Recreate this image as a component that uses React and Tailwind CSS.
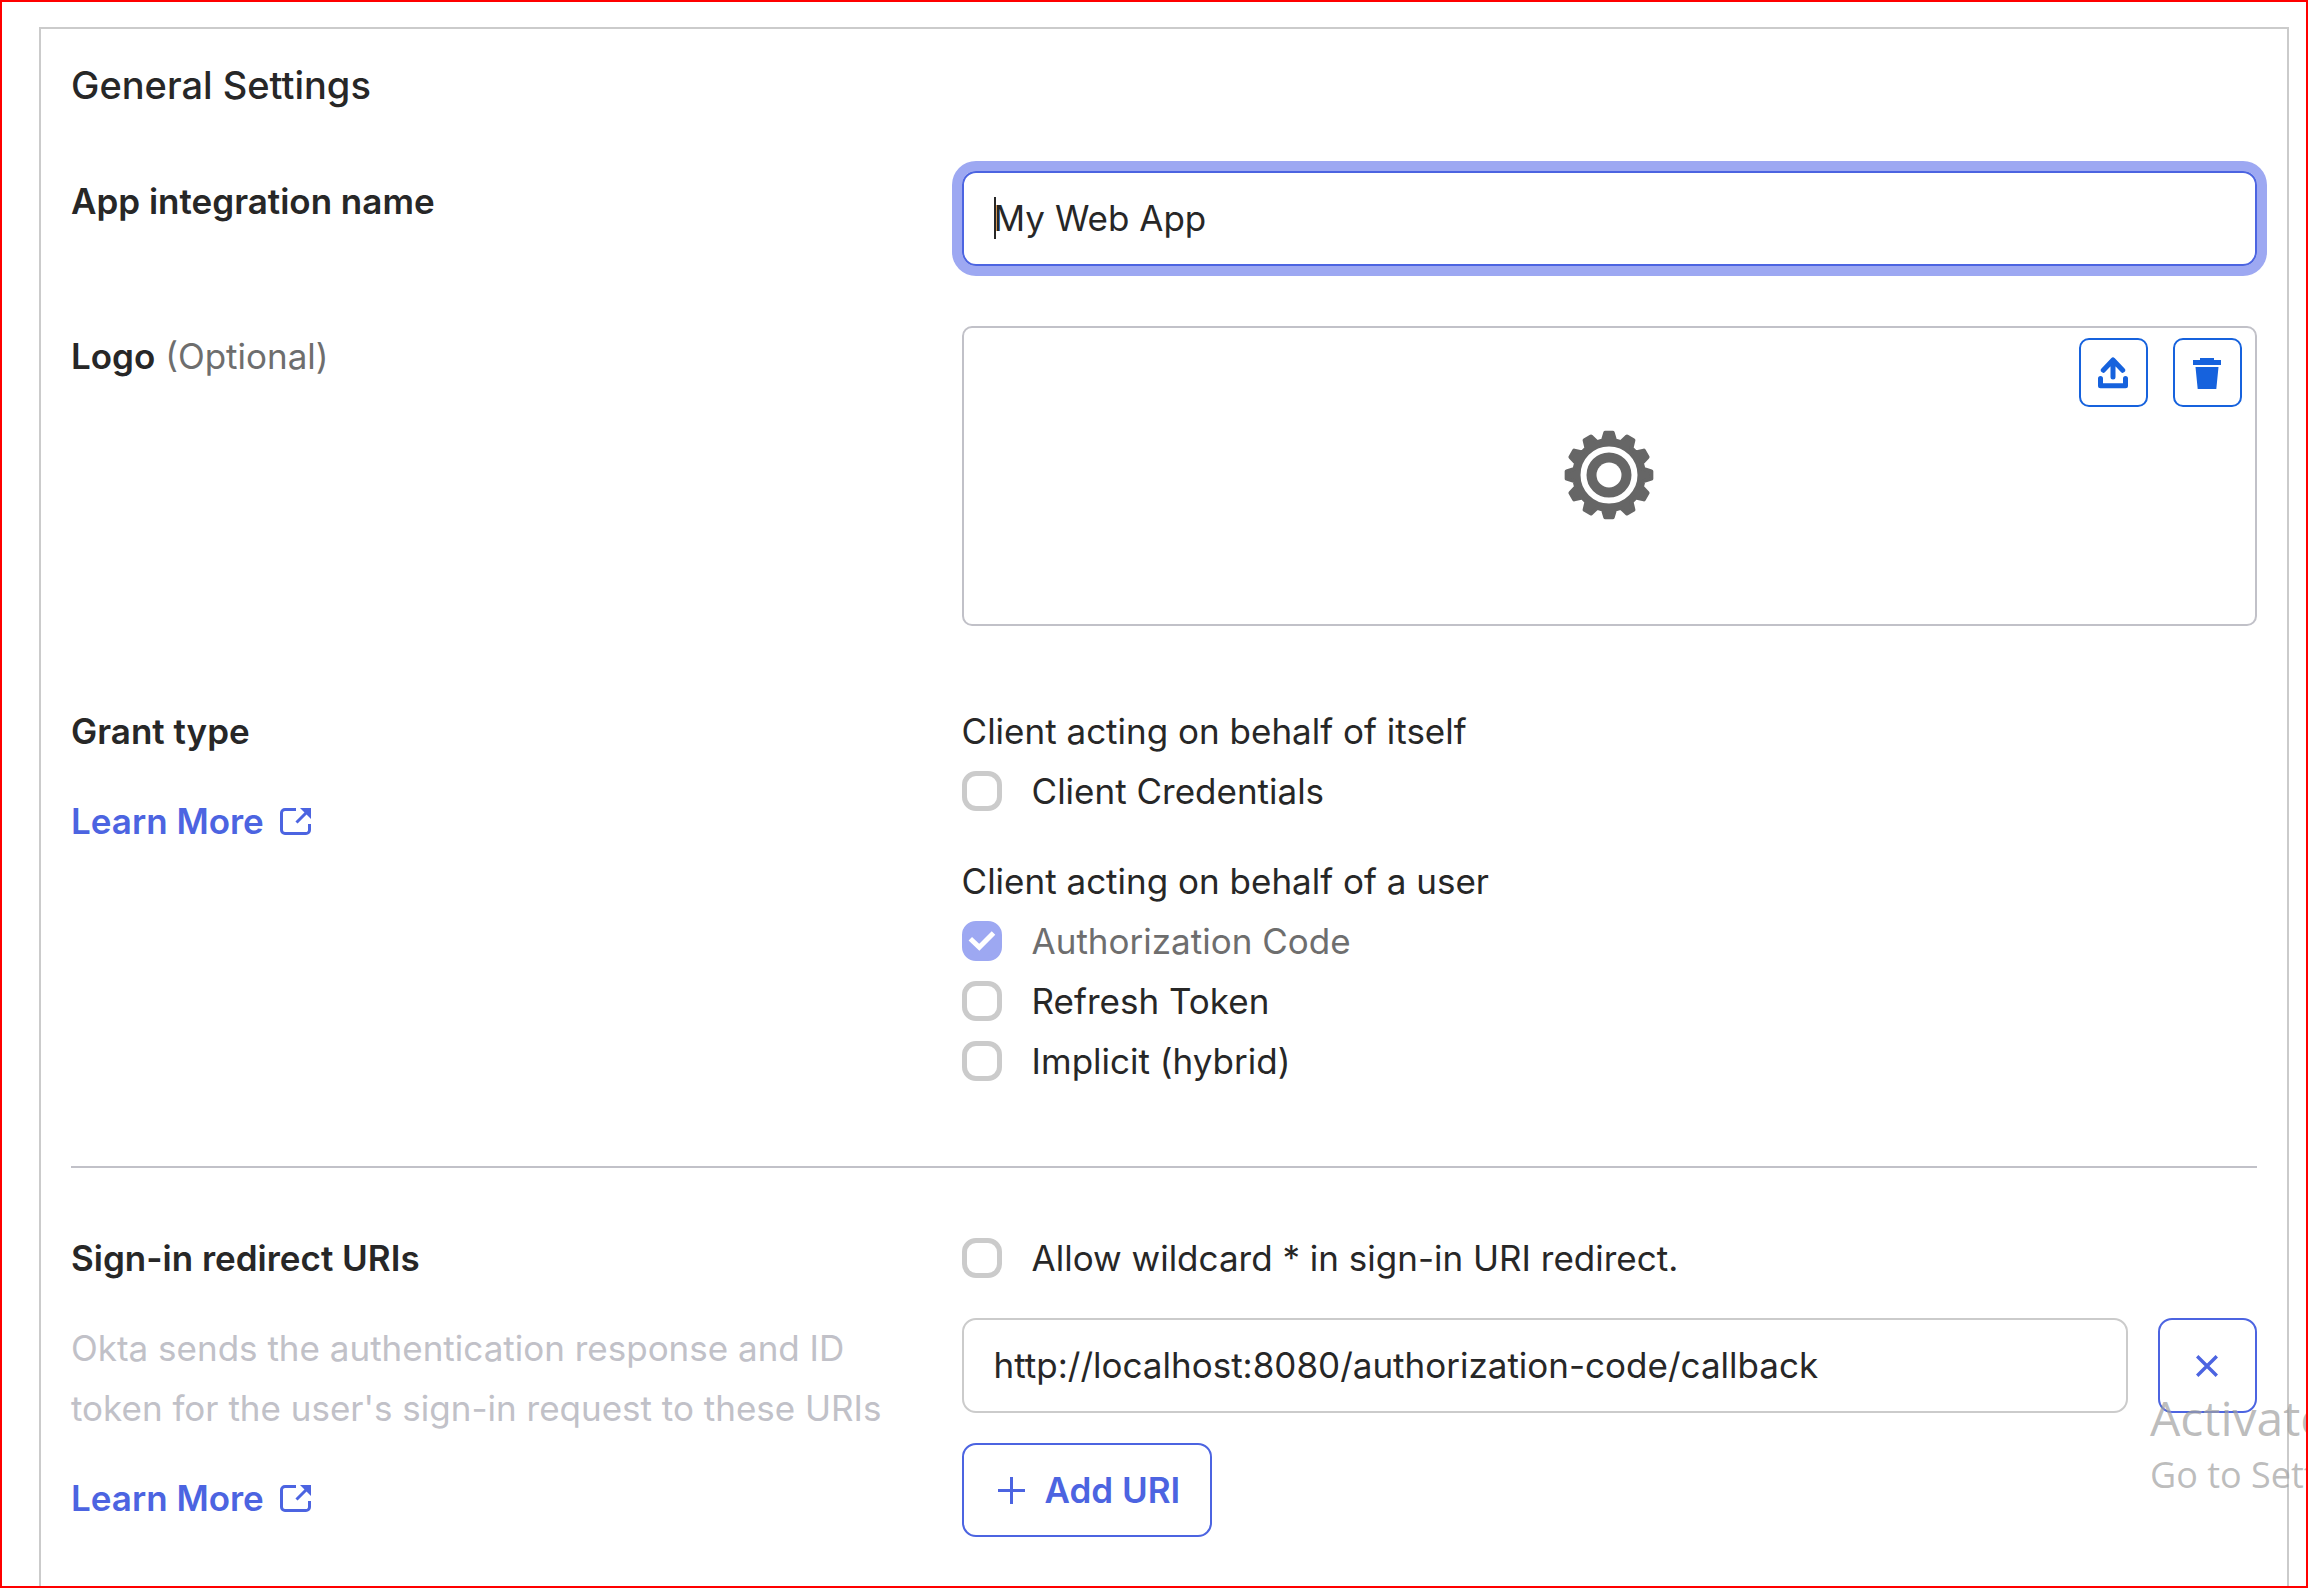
import React, { useState } from 'react';

const grantTypes = [
    { id: 'authorization_code', label: 'Authorization Code', checked: true, disabled: true },
    { id: 'refresh_token', label: 'Refresh Token' },
    { id: 'implicit', label: 'Implicit (hybrid)' }
];

const polar = (r, deg) => {
    const a = (deg * Math.PI) / 180;
    return `${(45 + r * Math.cos(a)).toFixed(2)} ${(45 + r * Math.sin(a)).toFixed(2)}`;
};

// 12 teeth, each one a small trapezoid standing on the rim
const gearPoints = Array.from({ length: 12 }, (_, i) => {
    const c = i * 30;
    return [polar(35, c - 10), polar(42.5, c - 5), polar(42.5, c + 5), polar(35, c + 10)];
}).flat();

const GearIcon = () => (
    <svg viewBox="0 0 90 90" className="w-[90px] h-[90px]" aria-hidden="true">
        <path d={`M${gearPoints.join('L')}Z`} fill="#666" stroke="#666" strokeWidth="4" strokeLinejoin="round" />
        <circle cx="45" cy="45" r="25.5" fill="none" stroke="#fff" strokeWidth="6" />
        <circle cx="45" cy="45" r="12.5" fill="#fff" />
    </svg>
);

const UploadIcon = () => (
    <svg viewBox="0 0 30 32" className="w-[30px] h-8" fill="none" stroke="currentColor" strokeWidth="5" strokeLinecap="round" strokeLinejoin="round" aria-hidden="true">
        <path d="M2.5 21.5V28.8H27.5V21.5" />
        <path d="M15 3V20M5.3 13.3L15 3L24.7 13.3" />
    </svg>
);

const TrashIcon = () => (
    <svg viewBox="0 0 28 32" className="w-7 h-8" fill="currentColor" aria-hidden="true">
        <path d="M7 1H21V3H28V8H0V3H7ZM2.5 10H25.5L23.3 32H4.7Z" />
    </svg>
);

const ExternalIcon = () => (
    <svg viewBox="0 0 31 27" className="w-[31px] h-[27px]" fill="none" stroke="currentColor" strokeWidth="3" aria-hidden="true">
        <path d="M16 1.5H5A3.5 3.5 0 0 0 1.5 5V22A3.5 3.5 0 0 0 5 25.5H26A3.5 3.5 0 0 0 29.5 22V16" />
        <path d="M16.5 14.5L27 4" />
        <path d="M20 0H31V11Z" fill="currentColor" stroke="none" />
    </svg>
);

const LearnMore = () => (
    <a href="#learn-more" className="flex items-center gap-4 w-fit mt-[30px] font-semibold text-[#4c64e1]">
        Learn More
        <ExternalIcon />
    </a>
);

const Checkbox = ({ id, label, checked = false, disabled = false }) => {
    const [on, setOn] = useState(checked);

    return (
        <div className="flex items-center gap-[30px]">
            <span className="relative flex">
                <input
                    id={id}
                    type="checkbox"
                    checked={on}
                    disabled={disabled}
                    onChange={(e) => setOn(e.target.checked)}
                    className="appearance-none w-10 h-10 rounded-[14px] border-5 border-[#cbcbcb] bg-white checked:border-[#9da8f2] checked:bg-[#9da8f2]"
                />
                {on && (
                    <svg viewBox="0 0 40 40" className="absolute inset-0 pointer-events-none" fill="none" stroke="#fff" strokeWidth="5" aria-hidden="true">
                        <path d="M8.3 17.8L17.3 26.3L31.5 12" />
                    </svg>
                )}
            </span>
            <label htmlFor={id} className={disabled ? 'text-[#6e6e6e]' : ''}>{label}</label>
        </div>
    );
};

const Row = ({ label, children, className = '' }) => (
    <div className={`grid grid-cols-[11fr_16fr] ${className}`}>
        <div>{label}</div>
        <div>{children}</div>
    </div>
);

const App = () => {
    const [name, setName] = useState('My Web App');
    const [uri, setUri] = useState('http://localhost:8080/authorization-code/callback');

    return (
        <div className="relative flex flex-col min-h-screen overflow-hidden border-2 border-[#ff0000] bg-white pt-[25px] pl-[37px] pr-[17px] font-['Inter',sans-serif] text-[35px] leading-[60px] text-[#272727]">
            <main className="grow border-2 border-b-0 border-[#cbcbcb] pt-[26px] px-[30px] pb-12">
                <h1 className="text-[38px] font-medium">General Settings</h1>

                <Row
                    className="mt-14"
                    label={<label htmlFor="app-name" className="font-semibold">App integration name</label>}
                >
                    <div className="relative">
                        <input
                            id="app-name"
                            type="text"
                            value={name}
                            onChange={(e) => setName(e.target.value)}
                            className="block w-full h-[95px] px-[30px] pb-0.5 rounded-[14px] border-2 border-[#4c64e1] ring-10 ring-[#9da8f2] outline-none caret-transparent"
                        />
                        {/* Text cursor */}
                        <span className="absolute left-8 top-[26px] w-0.5 h-[42px] bg-[#272727]"></span>
                    </div>
                </Row>

                <Row
                    className="mt-[60px]"
                    label={<span><span className="font-semibold">Logo</span> <span className="text-[#6e6e6e]">(Optional)</span></span>}
                >
                    <div className="relative flex items-center justify-center h-[300px] pb-[3px] rounded-[10px] border-2 border-[#c1c1c8]">
                        <GearIcon />
                        <div className="absolute top-[10px] right-[13px] flex gap-[25px] text-[#1662dd]">
                            <button aria-label="Upload logo" className="flex items-center justify-center w-[69px] h-[69px] rounded-[10px] border-2 border-[#1662dd]">
                                <UploadIcon />
                            </button>
                            <button aria-label="Delete logo" className="flex items-center justify-center w-[69px] h-[69px] rounded-[10px] border-2 border-[#1662dd]">
                                <TrashIcon />
                            </button>
                        </div>
                    </div>
                </Row>

                <Row
                    className="mt-[75px]"
                    label={
                        <>
                            <h2 className="font-semibold">Grant type</h2>
                            <LearnMore />
                        </>
                    }
                >
                    <p>Client acting on behalf of itself</p>
                    <Checkbox id="client_credentials" label="Client Credentials" />
                    <p className="mt-[30px]">Client acting on behalf of a user</p>
                    {grantTypes.map((g) => (
                        <Checkbox key={g.id} {...g} />
                    ))}
                </Row>

                <hr className="mt-[75px] mb-[60px] border-t-2 border-[#c1c1c8]" />

                <Row
                    label={
                        <>
                            <h2 className="font-semibold">Sign-in redirect URIs</h2>
                            <p className="mt-[30px] pr-12 text-[#c1c1c8]">
                                Okta sends the authentication response and ID token for the user's sign-in request to these URIs
                            </p>
                            <LearnMore />
                        </>
                    }
                >
                    <Checkbox id="wildcard" label="Allow wildcard * in sign-in URI redirect." />
                    <div className="flex gap-[30px] mt-[30px]">
                        <input
                            type="text"
                            aria-label="Sign-in redirect URI"
                            value={uri}
                            onChange={(e) => setUri(e.target.value)}
                            className="grow min-w-0 h-[95px] px-[30px] pb-0.5 rounded-[14px] border-2 border-[#cbcbcb] outline-none"
                        />
                        <button aria-label="Remove URI" className="flex items-center justify-center w-[99px] h-[95px] rounded-[14px] border-2 border-[#4c64e1] text-[#4c64e1]">
                            <svg viewBox="0 0 22 22" className="w-[22px] h-[22px]" stroke="currentColor" strokeWidth="3.4" aria-hidden="true">
                                <path d="M1.2 1.2L20.8 20.8M20.8 1.2L1.2 20.8" />
                            </svg>
                        </button>
                    </div>
                    <button className="flex items-center gap-5 h-[94px] mt-[30px] pl-[34px] pr-[30px] rounded-[14px] border-2 border-[#4c64e1] font-semibold text-[#4c64e1]">
                        <svg viewBox="0 0 27 27" className="w-[27px] h-[27px]" stroke="currentColor" strokeWidth="3" aria-hidden="true">
                            <path d="M13.5 0V27M0 13.5H27" />
                        </svg>
                        Add URI
                    </button>
                </Row>
            </main>

            {/* System watermark, runs off the right edge */}
            <div className="absolute left-[2148px] bottom-[84px] whitespace-nowrap pointer-events-none font-['Open_Sans',sans-serif] text-[#a0a0a0]/70">
                <p className="text-[48px]">Activate</p>
                <p className="text-[36px] leading-[54px]">Go to Sett</p>
            </div>
        </div>
    );
};

export default App;
